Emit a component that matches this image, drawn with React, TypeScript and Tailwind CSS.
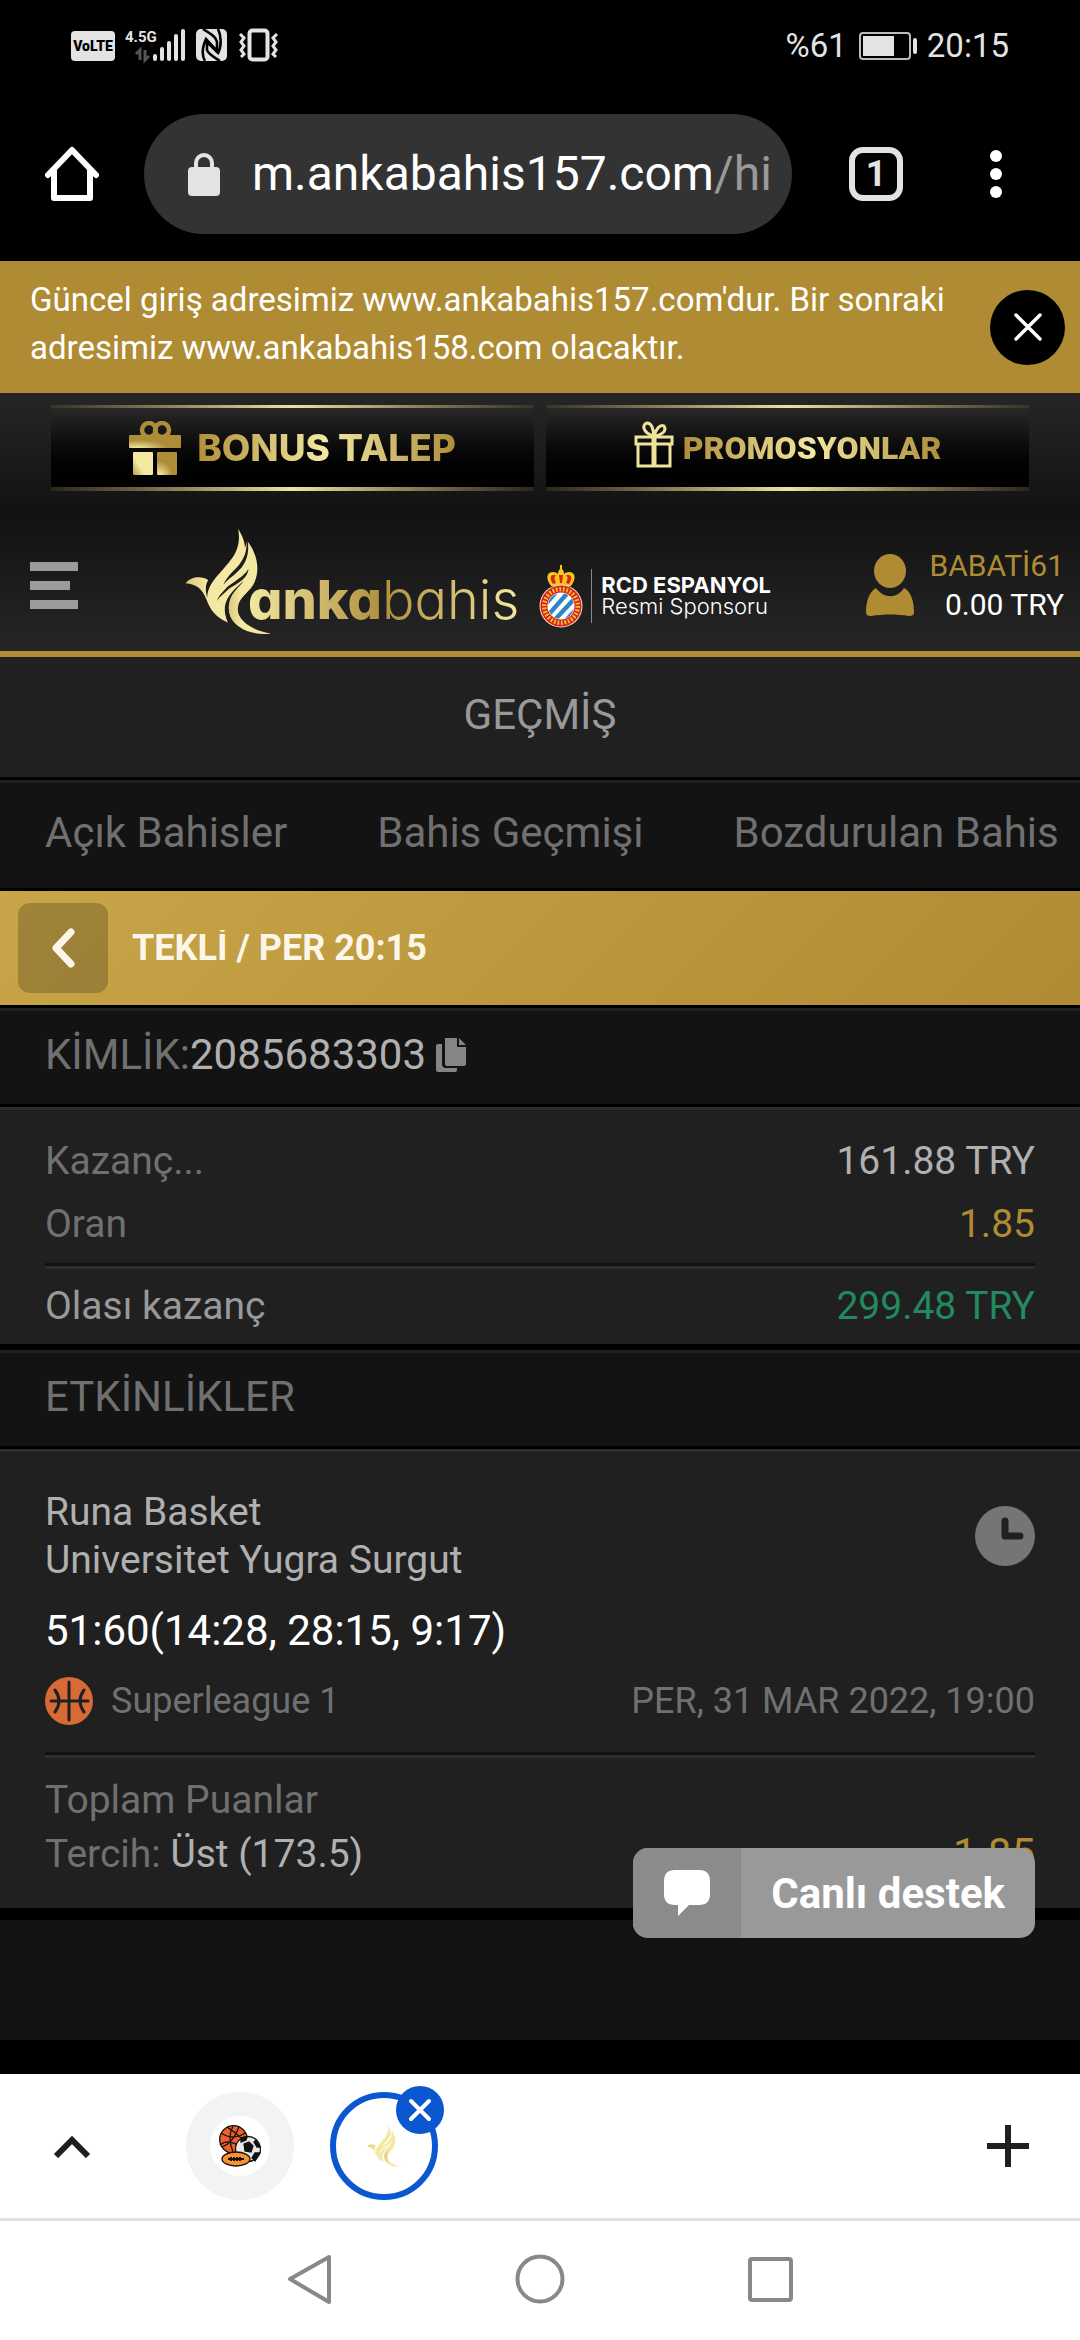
import React from "react";

function Bird({ className, gap }: { className: string; gap: string }) {
  return (
    <svg viewBox="74 58 260 322" className={className} aria-hidden="true">
      <defs>
        <linearGradient id="birdGold" x1="0" x2="1" y1="0" y2="0">
          <stop offset="0" stopColor="#dcc77c" />
          <stop offset="0.3" stopColor="#f4e9a2" />
          <stop offset="1" stopColor="#f4e9a2" />
        </linearGradient>
      </defs>
      <g fill="url(#birdGold)">
        <path d="M75 224 C92 203 124 202 143 215 C133 228 135 250 140 268 C142 216 190 190 222 138 C238 108 237 85 233 60 C256 98 262 128 240 163 L260 96 C292 136 304 196 272 238 C250 262 238 278 205 300 C190 312 196 328 203 343 C165 326 150 306 138 274 C124 238 108 228 75 224Z" />
        <path d="M272 238 C250 262 232 275 232 305 C234 340 280 368 332 376 C270 382 224 358 208 322 C196 288 214 258 240 232Z" />
      </g>
      <g fill={gap}>
        <path d="M257 90 C262 122 254 150 226 180 C206 200 196 212 189 228 C206 208 226 198 244 176 C262 152 266 126 262 96Z" />
        <path d="M264 181 C252 205 214 222 196 240 C182 254 172 266 169 278 C180 262 190 256 202 244 C226 226 262 214 264 181Z" />
        <path d="M250 217 C222 242 200 262 194 290 C190 312 197 328 203 343 L212 334 C200 306 202 274 222 250 C232 238 242 228 250 217Z" />
      </g>
    </svg>
  );
}

function Crest() {
  return (
    <svg viewBox="0 0 44 64" className="h-16 w-11 shrink-0" aria-hidden="true">
      <path d="M12 22 C6 14 8 8 14 8 C17 8 18 9 19 10 C19 7 20 6 21 5 L21 1 H23 L23 5 C24 6 25 7 25 10 C26 9 27 8 30 8 C36 8 38 14 32 22Z" fill="#f7c61b" />
      <path d="M14 11 C10 12 12 17 14 20 L17 19 C15 15 15 13 17 11Z M30 11 C34 12 32 17 30 20 L27 19 C29 15 29 13 27 11Z M20 11 H24 L23 19 H21Z" fill="#d8231f" />
      <circle cx="22" cy="42" r="21.5" fill="#f4d9c6" />
      <circle cx="22" cy="42" r="20.5" fill="#d9201e" />
      <circle cx="22" cy="42" r="16.8" fill="none" stroke="#f6c12a" strokeWidth="4.4" strokeDasharray="1.8 1.7" />
      <circle cx="22" cy="42" r="13.6" fill="#fff" />
      <clipPath id="crestClip">
        <circle cx="22" cy="42" r="13" />
      </clipPath>
      <g clipPath="url(#crestClip)" stroke="#2a86c6" strokeWidth="4.4">
        <path d="M-2 50 L24 20 M4 57 L32 25 M10 62 L40 30 M20 64 L46 36" />
      </g>
    </svg>
  );
}

function StatusBar() {
  return (
    <div className="flex items-center justify-between px-[71px] pt-[22px] text-[#e3e3e3]">
      <svg viewBox="0 0 210 36" className="h-9 w-[210px]" aria-hidden="true">
        <rect x="0" y="3" width="44" height="30" rx="4" fill="#e3e3e3" />
        <text x="22" y="23" fontFamily="Roboto" fontWeight="900" fontSize="14" textAnchor="middle" fill="#000">VoLTE</text>
        <text x="54" y="14" fontFamily="Roboto" fontWeight="700" fontSize="15" fill="#e3e3e3">4.5G</text>
        <path d="M65 26 l4 -4 v10 M74 22 v10 l4 -4" fill="none" stroke="#555" strokeWidth="3" />
        <path d="M84 28 v3 M91 21 v10 M98 15 v16 M105 8 v23 M112 3 v28" stroke="#e3e3e3" strokeWidth="4" strokeLinecap="round" />
        <rect x="125" y="1" width="31" height="32" rx="5" fill="#e3e3e3" />
        <path d="M132 1 C138 5 145 8 146 14 L146 23 L135 11 C131 20 131 28 134 33 M149 33 C143 29 137 26 136 22 L136 13 M136 14 L147 25 C151 18 150 7 147 1" fill="none" stroke="#000" strokeWidth="2.6" />
        <rect x="178.5" y="2.5" width="18" height="29" rx="3" fill="none" stroke="#e3e3e3" strokeWidth="4" />
        <path d="M169 6 l4 4 l-3 4 l3 4 l-3 4 l3 4 l-3 3 M206 6 l-4 4 l3 4 l-3 4 l3 4 l-3 4 l3 3" fill="none" stroke="#e3e3e3" strokeWidth="3" />
      </svg>
      <div className="flex items-center text-[33px] leading-[48px]">
        <span>%61</span>
        <svg viewBox="0 0 60 30" className="mr-2 ml-3 h-[30px] w-[60px]" aria-hidden="true">
          <rect x="1" y="2" width="50" height="26" rx="3" fill="none" stroke="#bbb" strokeWidth="2" />
          <rect x="4" y="5" width="31" height="20" fill="#e3e3e3" />
          <rect x="54" y="7" width="4" height="16" rx="2" fill="#e3e3e3" />
        </svg>
        <span>20:15</span>
      </div>
    </div>
  );
}

function BrowserBar() {
  return (
    <div className="flex items-center pt-11 pr-[78px] pb-[27px] pl-[44px]">
      <button type="button" aria-label="Ana sayfa">
        <svg viewBox="0 0 56 56" className="size-14" fill="none" stroke="#fff" strokeWidth="6" strokeLinecap="round" strokeLinejoin="round" aria-hidden="true">
          <path d="M4 29 L28 4 L52 29" />
          <path d="M10 25 V52 H46 V25" />
        </svg>
      </button>
      <div className="ml-11 flex h-[120px] min-w-0 flex-1 items-center overflow-hidden rounded-full bg-[#333333] pl-11 text-[48px]">
        <svg viewBox="0 0 32 43" className="mr-8 h-[43px] w-8 shrink-0" aria-hidden="true">
          <rect x="0" y="14" width="32" height="29" rx="4" fill="#e3e3e3" />
          <path d="M8 16 V10 a8 8 0 0 1 16 0 V16" fill="none" stroke="#e3e3e3" strokeWidth="4" />
        </svg>
        <span className="whitespace-nowrap text-white">
          m.ankabahis157.com<span className="text-[#999999]">/hi</span>
        </span>
      </div>
      <button type="button" aria-label="Sekmeler" className="ml-[57px] flex size-[54px] items-center justify-center rounded-[14px] border-[6px] border-[#e3e3e3] text-[36px] leading-none font-bold text-[#e3e3e3]">
        1
      </button>
      <button type="button" aria-label="Menü" className="ml-[87px] flex flex-col gap-[6px]">
        <span className="size-3 rounded-full bg-white" />
        <span className="size-3 rounded-full bg-white" />
        <span className="size-3 rounded-full bg-white" />
      </button>
    </div>
  );
}

function PromoLink({ children }: { children: React.ReactNode }) {
  return (
    <a href="#promo" className="flex flex-1 flex-col bg-linear-to-b from-[#2b2b2b] to-black">
      <span className="h-[3px] bg-linear-to-r from-[#3a3326] via-[#efe2a0] to-[#3a3326]" />
      <span className="flex h-[79px] items-center justify-center">{children}</span>
      <span className="h-1 bg-linear-to-r from-[#2c2618] via-[#efe2a0] to-[#2c2618]" />
    </a>
  );
}

function SiteHeader() {
  return (
    <header className="border-b-[6px] border-[#af8c33]">
      <div className="flex gap-3 bg-linear-to-b from-[#262626] to-[#121212] px-[51px] pt-3 pb-[21px]">
        <PromoLink>
          <svg viewBox="0 0 52 54" className="mr-4 h-[54px] w-[52px]" aria-hidden="true">
            <defs>
              <radialGradient id="lid" cx="0.15" cy="1" r="0.6">
                <stop offset="0" stopColor="#f4e9a2" />
                <stop offset="1" stopColor="#ad8d39" />
              </radialGradient>
              <linearGradient id="box" x1="0" y1="1" x2="0.8" y2="0.4">
                <stop offset="0" stopColor="#b89a48" />
                <stop offset="0.5" stopColor="#f4e9a2" />
              </linearGradient>
            </defs>
            <g fill="none" stroke="#ad8d39" strokeWidth="4.5">
              <circle cx="20" cy="9" r="7" />
              <circle cx="33" cy="9" r="7" />
            </g>
            <rect x="0" y="14" width="52" height="13" rx="1" fill="url(#lid)" />
            <rect x="4" y="31" width="20" height="23" rx="1" fill="url(#box)" />
            <rect x="28" y="31" width="20" height="23" rx="1" fill="url(#lid)" />
          </svg>
          <span className="bg-linear-to-r from-[#b08f38] via-[#f4e9a2] to-[#ad8d39] bg-clip-text font-[Inter] text-[37px] leading-[42px] font-extrabold text-transparent">
            BONUS TALEP
          </span>
        </PromoLink>
        <PromoLink>
          <svg viewBox="0 0 40 48" className="mr-[9px] mb-[6px] h-12 w-10" fill="none" stroke="#efe39b" strokeWidth="3" aria-hidden="true">
            <path d="M2 16 H38 V23 H2Z M4 23 V45 H36 V23" />
            <path d="M20 15 V45" strokeWidth="5" />
            <path d="M20 15 C8 12 8 3 13 2 C18 2 19 8 20 15 C22 8 26 3 30 5 C33 10 28 14 20 15Z" />
          </svg>
          <span className="bg-linear-to-r from-[#ad8d39] via-[#f4e9a2] to-[#ad8d39] bg-clip-text font-[Roboto] text-[32px] leading-[42px] font-black text-transparent">
            PROMOSYONLAR
          </span>
        </PromoLink>
      </div>
      <div className="flex h-[139px] items-center bg-linear-to-b from-[#121212] to-[#262626] pr-4 pl-[30px]">
        <button type="button" aria-label="Menüyü aç" className="mt-2 flex flex-col gap-[10px]">
          <span className="h-[9px] w-12 bg-[#9b9b9b]" />
          <span className="h-[9px] w-10 bg-[#9b9b9b]" />
          <span className="h-[9px] w-12 bg-[#9b9b9b]" />
        </button>
        <a href="#home" className="ml-[107px] flex items-center" aria-label="ankabahis">
          <Bird className="h-[107px] w-[87px]" gap="#1e1e1e" />
          <span className="-ml-6 mt-9 bg-linear-to-r from-[#f4e9a2] via-[#af8f3b] to-[#f4e9a2] bg-clip-text font-[Inter] text-[54px] leading-[60px] font-light text-transparent [font-feature-settings:'cv11']">
            <b className="font-extrabold">anka</b>bahis
          </span>
        </a>
        <div className="mt-7 ml-5 flex items-center">
          <Crest />
          <div className="ml-2 border-l border-[#8a8a8a] py-[6px] pl-[9px] font-[Inter] text-[22px] leading-[21px] whitespace-nowrap text-white">
            <p className="font-bold">RCD ESPANYOL</p>
            <p className="font-light">Resmi Sponsoru</p>
          </div>
        </div>
        <a href="#account" className="mt-[6px] ml-auto flex items-center gap-4 text-[30px] leading-[39px]">
          <svg viewBox="0 0 48 62" className="h-[62px] w-12" fill="#af8c33" aria-hidden="true">
            <ellipse cx="24" cy="17" rx="16" ry="17" />
            <path d="M10 34 C18 45 31 45 38 34 C46 38 48 50 48 58 C48 61 46 62 43 62 C30 60 18 60 5 62 C2 62 0 61 0 58 C0 48 3 38 10 34Z" />
          </svg>
          <span className="text-right">
            <span className="block text-[#af8c33]">BABATİ61</span>
            <span className="block text-white">0.00 TRY</span>
          </span>
        </a>
      </div>
    </header>
  );
}

function Divider() {
  return <hr className="h-[6px] border-t-[3px] border-b-[3px] border-t-[#121212] border-b-[#2d2d2d]" />;
}

const tabs = ["Açık Bahisler", "Bahis Geçmişi", "Bozdurulan Bahis"];

function BetHistory() {
  return (
    <main className="bg-[#202020] text-[39px] text-[#707070]">
      <h1 className="border-b-[3px] border-black pt-7 pb-8 text-center text-[42px] leading-[60px] text-[#999999]">GEÇMİŞ</h1>
      <nav className="flex gap-[90px] overflow-hidden border-t-[3px] border-b-[3px] border-t-[#202020] border-b-black bg-[#131313] pt-5 pb-[25px] pl-[45px] text-[42px] leading-[60px] whitespace-nowrap">
        {tabs.map((tab) => (
          <a key={tab} href="#tab" className="shrink-0">
            {tab}
          </a>
        ))}
      </nav>
      <div className="flex items-center border-b-[3px] border-black bg-linear-135 from-[#c8a548] to-[#af8c33] px-[18px] py-3 text-[#fbf6e8]">
        <button type="button" aria-label="Geri" className="flex size-[90px] items-center justify-center rounded-xl bg-black/20">
          <svg viewBox="0 0 24 40" className="h-10 w-6" fill="none" stroke="#fbf6e8" strokeWidth="7" strokeLinecap="round" strokeLinejoin="round" aria-hidden="true">
            <path d="M20 4 L5 20 L20 36" />
          </svg>
        </button>
        <h2 className="ml-6 overflow-hidden text-[36px] leading-[36px] font-bold">TEKLİ / PER 20:15</h2>
      </div>
      <div className="flex items-center border-t-[3px] border-b-[3px] border-t-[#202020] border-b-black bg-[#131313] px-[45px] pt-[14px] pb-[19px] text-[42px] leading-[60px]">
        KİMLİK:<span className="text-[#b0b0b0]">2085683303</span>
        <button type="button" aria-label="Kopyala" className="ml-[10px]">
          <svg viewBox="0 0 30 34" className="h-[34px] w-[30px]" fill="#858585" aria-hidden="true">
            <path d="M9 0 H21 V9 H30 V26 Q30 28 28 28 H11 Q9 28 9 26Z M23 0 L30 7 H23Z" />
            <path d="M0 8 Q0 6 2 6 H6 V26 Q6 30 10 30 H21 V32 Q21 34 19 34 H2 Q0 34 0 32Z" />
          </svg>
        </button>
      </div>
      <section className="border-t-[3px] border-b-[6px] border-t-[#2d2d2d] border-b-black px-[45px] pt-5 pb-[6px] leading-[63px]">
        <div className="flex justify-between">
          <span>Kazanç...</span>
          <span className="text-[#b0b0b0]">161.88 TRY</span>
        </div>
        <div className="mb-[7px] flex justify-between">
          <span>Oran</span>
          <span className="text-[#af8c33]">1.85</span>
        </div>
        <Divider />
        <div className="mt-[6px] flex justify-between">
          <span className="text-[#999999]">Olası kazanç</span>
          <span className="text-[#238a60]">299.48 TRY</span>
        </div>
      </section>
      <h2 className="border-t-[3px] border-b-[3px] border-t-[#202020] border-b-black bg-[#131313] px-[45px] pt-[14px] pb-[19px] text-[42px] leading-[60px]">ETKİNLİKLER</h2>
      <section className="border-t-[3px] border-b-[12px] border-t-[#2d2d2d] border-b-black px-[45px] pt-9 pb-[27px]">
        <div className="flex items-center justify-between leading-[48px] text-[#b0b0b0]">
          <div>
            <p>Runa Basket</p>
            <p>Universitet Yugra Surgut</p>
          </div>
          <svg viewBox="0 0 60 60" className="size-[60px]" aria-hidden="true">
            <circle cx="30" cy="30" r="30" fill="#757575" />
            <path d="M30 15 V30 H45" fill="none" stroke="#202020" strokeWidth="7" strokeLinecap="round" strokeLinejoin="round" />
          </svg>
        </div>
        <p className="mt-5 text-[42px] leading-[54px] text-white">51:60(14:28, 28:15, 9:17)</p>
        <div className="mt-[19px] mb-[27px] flex items-center text-[36px] leading-[48px]">
          <svg viewBox="0 0 48 48" className="mr-[18px] size-12" fill="none" stroke="#202020" strokeWidth="3" strokeLinecap="round" aria-hidden="true">
            <circle cx="24" cy="24" r="24" fill="#d86a36" stroke="none" />
            <path d="M24 5 V43 M6 24 H43 M10 13 Q18 24 10 35 M39 13 Q31 24 39 35" />
          </svg>
          <span>Superleague 1</span>
          <span className="ml-auto">PER, 31 MAR 2022, 19:00</span>
        </div>
        <Divider />
        <p className="mt-[15px] leading-[54px]">Toplam Puanlar</p>
        <div className="flex justify-between leading-[54px]">
          <span>
            Tercih: <span className="text-[#b0b0b0]">Üst (173.5)</span>
          </span>
          <span className="text-[42px] text-[#af8c33]">1.85</span>
        </div>
      </section>
      <div className="h-[120px] bg-[#131313]" />
      <div className="h-[34px] bg-black" />
    </main>
  );
}

function TabStrip() {
  return (
    <div className="flex items-center px-[51px] py-[18px]">
      <button type="button" aria-label="Genişlet" className="w-[42px]">
        <svg viewBox="0 0 42 24" className="h-6 w-[42px]" fill="none" stroke="#1f1f1f" strokeWidth="6" aria-hidden="true">
          <path d="M5 22 L21 6 L37 22" />
        </svg>
      </button>
      <button type="button" aria-label="Sekme 1" className="ml-[93px] flex size-[108px] items-center justify-center rounded-full bg-[#f1f3f4]">
        <span className="flex size-[60px] items-center justify-center rounded-full bg-white">
          <svg viewBox="0 0 42 42" className="size-[42px]" stroke="#111" strokeWidth="1.3" aria-hidden="true">
            <circle cx="14.5" cy="14.5" r="13.8" fill="#ee5f2b" />
            <path d="M2 8 Q14 16 26 8 M1 20 Q10 12 24 24 M14 1 Q8 12 14 27 M8 2 Q20 10 27 18 M3 22 Q14 18 20 2" fill="none" />
            <circle cx="29" cy="24" r="12.5" fill="#e9e9e9" />
            <path d="M25 19 L30 17 L34 21 L32 27 L26 26Z M22 13 L28 12 L27 15 L22 17Z M37 15 L41 22 L38 22 L35 17Z M36 28 L41 28 L36 36 L33 33Z M20 30 L24 31 L25 36 L21 35Z" fill="#111" />
            <ellipse cx="17" cy="34" rx="14" ry="7" fill="#f7922f" />
            <path d="M9 34 H25 M12 32 V36 M15 32 V36 M18 32 V36 M21 32 V36" strokeWidth="2" />
          </svg>
        </span>
      </button>
      <div className="relative ml-9">
        <button type="button" aria-label="Sekme 2" className="flex size-[108px] items-center justify-center rounded-full border-[6px] border-[#0b57d0] bg-white">
          <Bird className="h-[42px] w-[34px]" gap="#ffffff" />
        </button>
        <button type="button" aria-label="Sekmeyi kapat" className="absolute -top-[6px] -right-[6px] flex size-12 items-center justify-center rounded-full bg-[#0b57d0]">
          <svg viewBox="0 0 24 24" className="size-6" stroke="#fff" strokeWidth="4" strokeLinecap="round" aria-hidden="true">
            <path d="M3 3 L21 21 M21 3 L3 21" />
          </svg>
        </button>
      </div>
      <button type="button" aria-label="Yeni sekme" className="ml-auto">
        <svg viewBox="0 0 42 42" className="size-[42px] text-[#1f1f1f]" stroke="currentColor" strokeWidth="6" aria-hidden="true">
          <path d="M21 0 V42 M0 21 H42" />
        </svg>
      </button>
    </div>
  );
}

function SystemNav() {
  return (
    <div className="flex items-center justify-center border-t-[3px] border-[#e1e1e1] pt-[33px] pb-[35px]">
      <button type="button" aria-label="Geri">
        <svg viewBox="0 0 45 51" className="h-[51px] w-[45px]" fill="none" stroke="#888" strokeWidth="4" strokeLinejoin="round" aria-hidden="true">
          <path d="M42 3 L3 25 L42 48Z" />
        </svg>
      </button>
      <button type="button" aria-label="Ana ekran" className="mx-[183px]">
        <svg viewBox="0 0 50 51" className="h-[51px] w-[50px]" fill="none" stroke="#888" strokeWidth="4" aria-hidden="true">
          <circle cx="25" cy="25" r="22.5" />
        </svg>
      </button>
      <button type="button" aria-label="Son uygulamalar">
        <svg viewBox="0 0 45 45" className="size-[45px]" fill="none" stroke="#888" strokeWidth="4" aria-hidden="true">
          <rect x="2" y="2" width="41" height="41" rx="2" />
        </svg>
      </button>
    </div>
  );
}

export default function App() {
  return (
    <div className="min-h-screen bg-white font-[Roboto,sans-serif]">
      <div className="bg-black">
        <StatusBar />
        <BrowserBar />
      </div>
      <div className="relative">
        <div className="flex items-center justify-between bg-[#af8c33] pr-[15px] pl-[30px] text-white">
          <p className="max-w-[930px] pt-[15px] pb-[21px] text-[33px] leading-[48px]">
            Güncel giriş adresimiz www.ankabahis157.com'dur. Bir sonraki adresimiz www.ankabahis158.com olacaktır.
          </p>
          <button type="button" aria-label="Kapat" className="flex size-[75px] shrink-0 items-center justify-center rounded-full bg-black">
            <svg viewBox="0 0 28 28" className="size-7" stroke="#fff" strokeWidth="3.5" strokeLinecap="round" aria-hidden="true">
              <path d="M2 2 L26 26 M26 2 L2 26" />
            </svg>
          </button>
        </div>
        <SiteHeader />
        <BetHistory />
        <button type="button" className="absolute right-[45px] bottom-[136px] flex h-[90px] items-center overflow-hidden rounded-[15px] bg-[#999999] text-[42px] font-bold text-white">
          <span className="flex h-full w-[108px] items-center justify-center bg-[#8b8b8b]">
            <svg viewBox="0 0 48 48" className="size-12" fill="#fff" aria-hidden="true">
              <path d="M12 1 H36 Q47 1 47 12 V25 Q47 36 36 36 H26 L15 47 V36 H12 Q1 36 1 25 V12 Q1 1 12 1Z" />
            </svg>
          </span>
          <span className="px-[30px]">Canlı destek</span>
        </button>
      </div>
      <TabStrip />
      <SystemNav />
    </div>
  );
}
